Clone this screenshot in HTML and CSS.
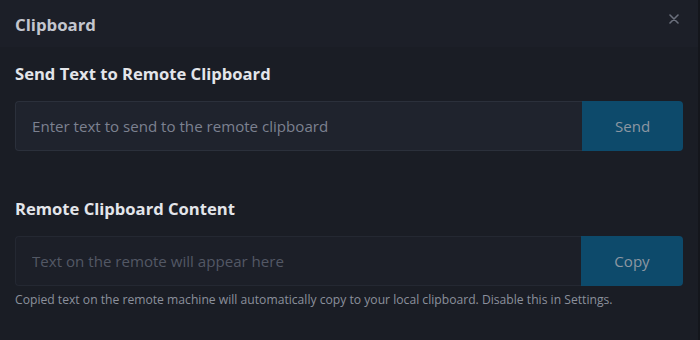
FILE: index.html
```html
<!DOCTYPE html>
<html>
<head>
<meta charset="utf-8">
<link rel="stylesheet" href="styles.css">
</head>
<body>
<div class="modal">
  <div class="modal-header">
    <span class="modal-title">Clipboard</span>
    <button class="close" aria-label="Close">
      <svg width="10" height="10" viewBox="0 0 10 10"><path d="M1 1L9 9M9 1L1 9" stroke="currentColor" stroke-width="1.6" stroke-linecap="round"/></svg>
    </button>
  </div>
  <div class="modal-body">
    <section class="section">
      <h2 class="section-title">Send Text to Remote Clipboard</h2>
      <div class="input-group">
        <input class="field" type="text" placeholder="Enter text to send to the remote clipboard">
        <button class="btn">Send</button>
      </div>
    </section>
    <section class="section second">
      <h2 class="section-title">Remote Clipboard Content</h2>
      <div class="input-group readonly">
        <input class="field" type="text" placeholder="Text on the remote will appear here" readonly>
        <button class="btn">Copy</button>
      </div>
      <p class="help">Copied text on the remote machine will automatically copy to your local clipboard. Disable this in Settings.</p>
    </section>
  </div>
</div>
</body>
</html>
```
FILE: styles.css
```css
html, body {
  margin: 0;
  padding: 0;
  background: #191c24;
  height: 100%;
}
body {
  font-family: "Open Sans", "Noto Sans", sans-serif;
  color: #e0e2e8;
}
.modal {
  width: 698px;
  height: 340px;
  background: #1a1d25;
  border-right: 2px solid #14161c;
  display: flex;
  flex-direction: column;
}
.modal-header {
  height: 47px;
  background: #1c1f28;
  display: flex;
  align-items: center;
  justify-content: space-between;
  padding: 0 19px 0 15px;
  box-sizing: border-box;
}
.modal-title {
  font-size: 16.8px;
  font-weight: 700;
  color: #c3c6ce;
  margin-top: 1px;
}
.close {
  background: none;
  border: 0;
  padding: 0;
  color: #6a6f7c;
  display: flex;
  margin-top: -10px;
}
.modal-body {
  padding: 16px 15px 0 15px;
}
.section-title {
  margin: 0 0 16px 0;
  font-size: 16.6px;
  font-weight: 700;
  color: #e3e5ea;
  line-height: 22px;
}
.second {
  margin-top: 47px;
}
.input-group {
  display: flex;
  height: 50px;
}
.field {
  flex: 1;
  min-width: 0;
  box-sizing: border-box;
  height: 50px;
  background: #1f232d;
  border: 1px solid #2b303b;
  border-right: 0;
  border-radius: 4px 0 0 4px;
  padding: 0 16px;
  font-family: inherit;
  font-size: 15.1px;
  color: #c0c4cc;
  outline: none;
}
.field::placeholder {
  color: #7c8190;
}
.readonly .field {
  background: #1c1f28;
  border-color: #242832;
}
.readonly .field::placeholder {
  color: #535865;
}
.btn {
  width: 101px;
  height: 50px;
  background: #0d4a6b;
  border: 0;
  border-radius: 0 4px 4px 0;
  color: #8c97a2;
  font-family: inherit;
  font-size: 15.1px;
  padding: 0;
}
.readonly .btn {
  width: 102px;
}
.help {
  margin: 6px 0 0 0;
  font-size: 12.15px;
  color: #8b909c;
  line-height: 16px;
}
```
